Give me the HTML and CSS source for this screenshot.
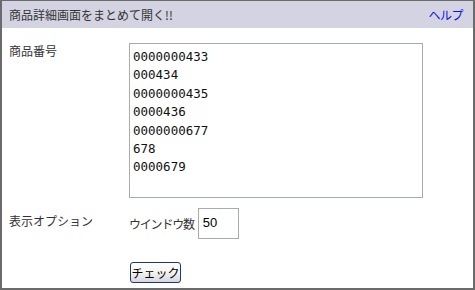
FILE: index.html
```html
<!DOCTYPE html>
<html lang="ja">
<head>
<meta charset="utf-8">
<link rel="stylesheet" href="styles.css">
</head>
<body>
<div class="panel">
  <div class="head">
    <span class="title">商品詳細画面をまとめて開く!!</span>
    <a class="help" href="#">ヘルプ</a>
  </div>
  <div class="body">
    <div class="label">商品番号</div>
    <div class="field">
      <textarea class="codes">0000000433
000434
0000000435
0000436
0000000677
678
0000679</textarea>
    </div>
    <div class="label opt">表示オプション</div>
    <div class="field inline">
      <span class="wlabel">ウインドウ数</span>
      <input class="num" type="text" value="50">
    </div>
    <div></div>
    <div class="field">
      <button class="btn" type="button">チェック</button>
    </div>
  </div>
</div>
</body>
</html>
```

FILE: styles.css
```css
html, body {
  margin: 0;
  padding: 0;
  background: #fff;
}
.panel {
  box-sizing: border-box;
  width: 475px;
  height: 290px;
  border: 2px solid #6b6b6b;
  border-top-width: 1px;
  font-family: "Noto Sans CJK JP", sans-serif;
  font-size: 12px;
  color: #333;
}
.head {
  height: 27px;
  background: #d3d3e2;
  display: flex;
  align-items: center;
  justify-content: space-between;
  padding: 0 10px 0 7px;
}
.title {
  color: #333;
  line-height: 14px;
}
.help {
  color: #1010ee;
  text-decoration: none;
  line-height: 14px;
  letter-spacing: -0.5px;
}
.body {
  display: grid;
  grid-template-columns: 127px 1fr;
  padding-top: 15px;
  row-gap: 10px;
}
.label {
  padding-left: 7px;
  line-height: 14px;
  padding-top: 1px;
}
.label.opt {
  padding-top: 6px;
}
.field.inline {
  display: flex;
  align-items: center;
  gap: 4px;
}
.codes {
  display: block;
  box-sizing: border-box;
  width: 294px;
  height: 155px;
  margin: 0;
  border: 1px solid #a5acb2;
  padding: 4px 3px;
  font-family: "DejaVu Sans Mono", monospace;
  font-size: 12.5px;
  line-height: 18.4px;
  color: #111;
  resize: none;
  overflow: hidden;
}
.wlabel {
  padding-top: 1px;
  line-height: 14px;
  letter-spacing: -1.2px;
  color: #333;
}
.num {
  box-sizing: border-box;
  width: 41px;
  height: 31px;
  margin: 0;
  border: 1px solid #a5acb2;
  padding: 0 4px 2px;
  font-family: "Liberation Sans", sans-serif;
  font-size: 13px;
  color: #000;
}
.field .btn {
  margin-top: 13px;
}
.btn {
  box-sizing: border-box;
  width: 51px;
  height: 21px;
  margin-left: 1px;
  padding: 0;
  border: 1px solid #1c3a6e;
  border-radius: 3px;
  background: linear-gradient(#ffffff 0%, #f4f4f0 50%, #d6d6e2 100%);
  font-family: "Noto Sans CJK JP", sans-serif;
  font-size: 12px;
  color: #000;
  line-height: 14px;
}
```
